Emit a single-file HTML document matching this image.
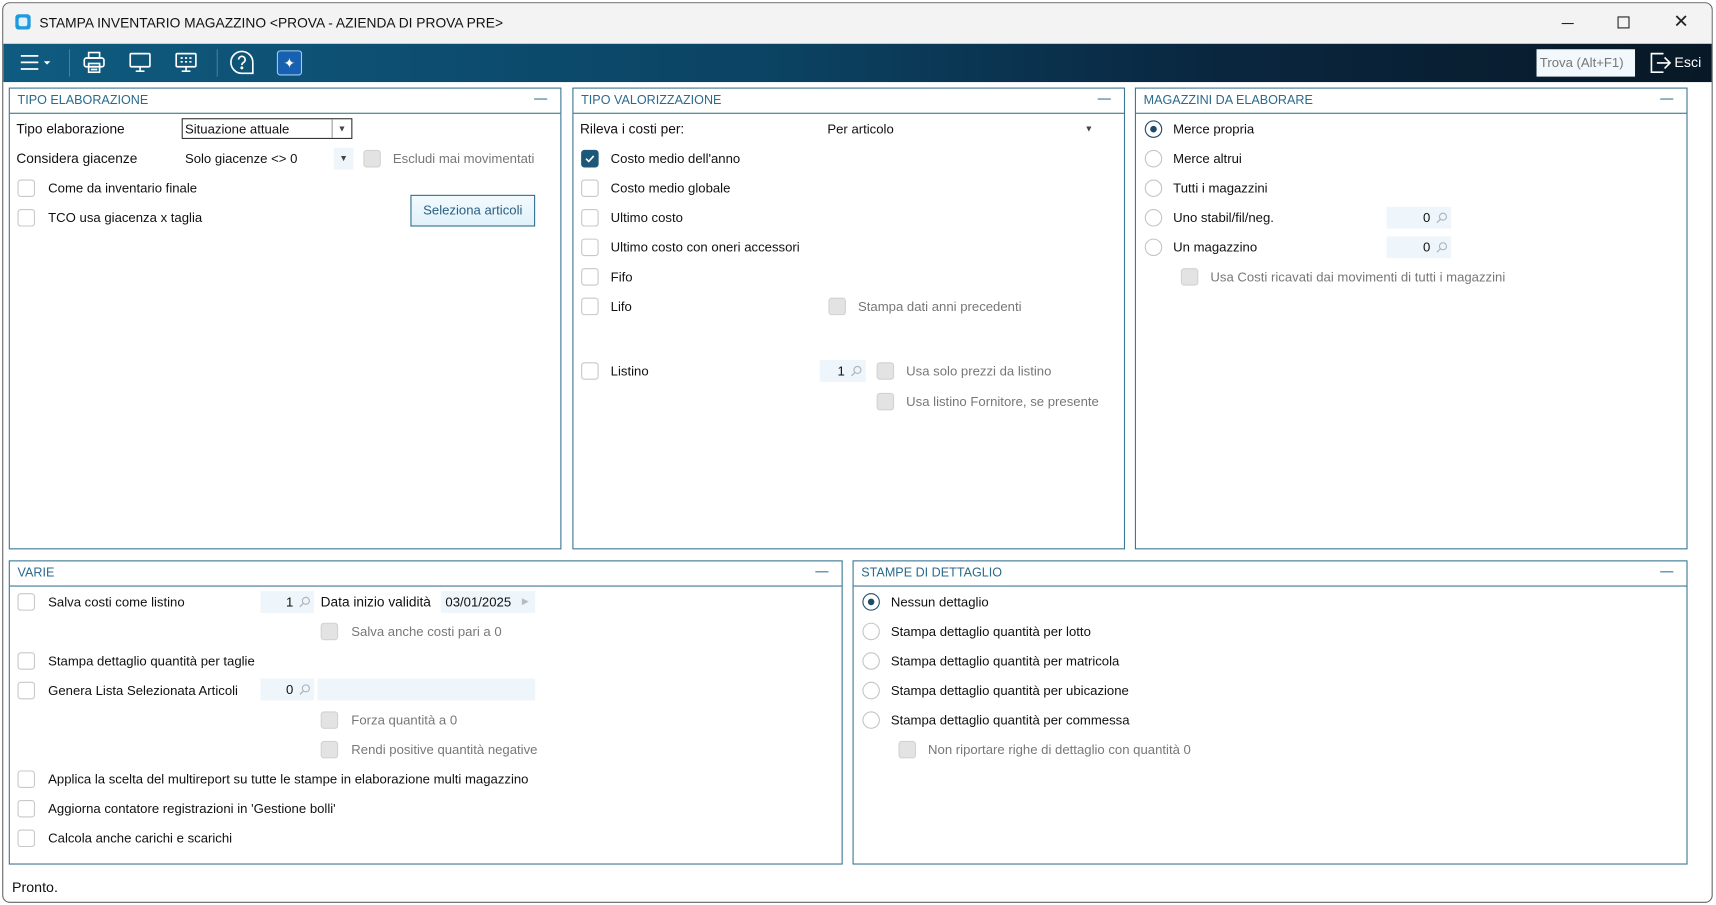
<!DOCTYPE html>
<html><head><meta charset="utf-8">
<style>
html,body{margin:0;padding:0;width:1716px;height:905px;overflow:hidden;background:#fff}
#w{position:absolute;left:0;top:0;width:1568px;height:827px;transform:scale(1.09439);transform-origin:0 0;font-family:"Liberation Sans",sans-serif;font-size:12px;color:#111}
.a{position:absolute;white-space:nowrap}
.frame{left:2px;top:2px;width:1561px;height:821px;border:1px solid #666;border-radius:7px;background:#fff;overflow:hidden}
.title{left:0;top:0;width:1563px;height:37px;background:#f3f3f3}
.tb{left:0;top:37px;width:1563px;height:35px;background:linear-gradient(90deg,#0f5b80 0%,#0b4363 45%,#0a2740 70%,#081826 100%)}
.p{position:absolute;border:1px solid #3a7592;background:#fff}
.ph{position:absolute;left:0;top:0;right:0;height:22px;border-bottom:1px solid #3a7592;color:#2a6a8c;font-size:11.5px;line-height:23px;padding-left:7px}
.ph:after{content:"";position:absolute;right:12px;top:9px;width:12px;height:1px;background:#3a7592}
.cb{position:absolute;width:14px;height:14px;border:1px solid #c8c8c8;border-radius:3px;background:#fff}
.cb.d{background:#e3e3e3;border-color:#d2d2d2}
.cb.c{background:#1d5878;border-color:#1d5878}
.rd{position:absolute;width:14px;height:14px;border:1px solid #c4c4c4;border-radius:50%;background:#fff}
.rd.c{border-color:#1d4a66}
.rd.c:after{content:"";position:absolute;left:4px;top:4px;width:6px;height:6px;border-radius:50%;background:#1d4a66}
.l{position:absolute;white-space:nowrap;line-height:14px}
.g{color:#777}
.f{position:absolute;background:#eef5fb;height:20px;line-height:20px;text-align:right}
.mg{display:inline-block;width:14px;height:12px;margin-left:3px;margin-right:2px;position:relative;top:2px}
</style></head><body>
<div id="w">
<div class="a frame">
<div class="a title">
<div class="a" style="left:11px;top:10px;width:14px;height:14px;border-radius:3px;background:#1e9be0"><div style="position:absolute;left:3px;top:3px;width:8px;height:8px;background:#dff1fb;border-radius:2px"></div></div>
<div class="a" style="left:33px;top:11px;font-size:12.6px;color:#111">STAMPA INVENTARIO MAGAZZINO &lt;PROVA - AZIENDA DI PROVA PRE&gt;</div>
<div class="a" style="left:1424px;top:18px;width:11px;height:1px;background:#222"></div>
<div class="a" style="left:1475px;top:12px;width:9px;height:9px;border:1px solid #222"></div>
<div class="a" style="left:1526px;top:7px;font-size:17px;color:#222">✕</div>
</div>
<div class="a tb">
<svg class="a" style="left:14px;top:8px" width="32" height="18" viewBox="0 0 32 18" stroke="#fff" stroke-width="1.6" fill="none"><path d="M2 3h16M2 9h16M2 15h16"/><path d="M23 8h6l-3 3z" fill="#fff" stroke="none"/></svg>
<div class="a" style="left:60px;top:5px;width:1px;height:25px;background:#4b7d98"></div>
<svg class="a" style="left:72px;top:6px" width="22" height="22" viewBox="0 0 22 22" stroke="#fff" stroke-width="1.5" fill="none"><rect x="6" y="2" width="10" height="5"/><rect x="2" y="7" width="18" height="8" rx="2"/><rect x="6" y="12" width="10" height="8"/><path d="M8 15h6M8 17.5h6"/></svg>
<svg class="a" style="left:114px;top:6px" width="22" height="22" viewBox="0 0 22 22" stroke="#fff" stroke-width="1.5" fill="none"><rect x="2" y="3" width="18" height="12" rx="1"/><path d="M11 15v4M7 19h8"/></svg>
<svg class="a" style="left:156px;top:6px" width="22" height="22" viewBox="0 0 22 22" stroke="#fff" stroke-width="1.5" fill="none"><rect x="2" y="3" width="18" height="12" rx="1"/><path d="M11 15v4M7 19h8M6 7h2M10 7h2M14 7h2M6 10.5h2M10 10.5h2M14 10.5h2"/></svg>
<div class="a" style="left:195px;top:5px;width:1px;height:25px;background:#4b7d98"></div>
<svg class="a" style="left:206px;top:5px" width="24" height="24" viewBox="0 0 24 24" stroke="#fff" stroke-width="1.5" fill="none"><path d="M12 2a10 10 0 1 0 0 20h10V12A10 10 0 0 0 12 2z"/><path d="M9 9.5a3 3 0 1 1 4.5 2.6c-1 .6-1.5 1.2-1.5 2.4"/><circle cx="12" cy="17" r=".6" fill="#fff"/></svg>
<div class="a" style="left:250px;top:6px;width:21px;height:21px;background:#1860b0;border:1px solid #9cc8ff;border-radius:3px;color:#fff;font-size:13px;text-align:center;line-height:21px">✦</div>
<div class="a" style="left:1401px;top:5px;width:90px;height:25px;background:#f3f8fc;color:#777;line-height:25px;padding-left:3px;box-sizing:border-box">Trova (Alt+F1)</div>
<svg class="a" style="left:1503px;top:6px" width="22" height="22" viewBox="0 0 22 22" stroke="#fff" stroke-width="1.5" fill="none"><path d="M14 3H3v17h11"/><path d="M8 11.5h12M15 6.5l5 5-5 5"/></svg>
<div class="a" style="left:1527px;top:9px;color:#fff;font-size:13px">Esci</div>
</div>
</div>

<svg width="0" height="0" style="position:absolute"><defs><symbol id="mg" viewBox="0 0 14 12"><circle cx="8.5" cy="5" r="3.2" fill="none" stroke="#aab2bc" stroke-width="1"/><path d="M6.2 7.3L3 10.5" stroke="#aab2bc" stroke-width="1.1"/></symbol></defs></svg>

<!-- Panel 1 -->
<div class="p" style="left:8px;top:80px;width:503px;height:420px"><div class="ph">TIPO ELABORAZIONE</div></div>
<div class="l" style="left:15px;top:111px;font-size:12.5px">Tipo elaborazione</div>
<div class="a" style="left:166px;top:108px;width:156px;height:19px;border:1px solid #333;box-sizing:border-box"><span style="position:absolute;left:2px;top:2px;font-size:12px">Situazione attuale</span><span style="position:absolute;right:0;top:0;width:17px;height:17px;border-left:1px solid #999;font-size:8px;text-align:center;line-height:17px;color:#444">▼</span></div>
<div class="l" style="left:15px;top:138px;font-size:12.5px">Considera giacenze</div>
<div class="l" style="left:169px;top:138px">Solo giacenze &lt;&gt; 0</div>
<div class="a" style="left:305px;top:135px;width:18px;height:20px;background:#eef5fb;font-size:8px;text-align:center;line-height:20px;color:#444">▼</div>
<div class="cb d" style="left:332px;top:137px"></div><div class="l g" style="left:359px;top:138px">Escludi mai movimentati</div>
<div class="cb" style="left:16px;top:164px"></div><div class="l" style="left:44px;top:165px">Come da inventario finale</div>
<div class="cb" style="left:16px;top:191px"></div><div class="l" style="left:44px;top:192px">TCO usa giacenza x taglia</div>
<div class="a" style="left:375px;top:178px;width:114px;height:29px;border:1px solid #2d6e8c;box-sizing:border-box;background:linear-gradient(#f2fafe,#e0f1fa);color:#2a5f80;text-align:center;line-height:27px">Seleziona articoli</div>

<!-- Panel 2 -->
<div class="p" style="left:523px;top:80px;width:503px;height:420px"><div class="ph">TIPO VALORIZZAZIONE</div></div>
<div class="l" style="left:530px;top:111px;font-size:12.5px">Rileva i costi per:</div>
<div class="l" style="left:756px;top:111px">Per articolo</div>
<div class="l" style="left:991px;top:111px;font-size:8px;color:#444">▼</div>
<div class="cb c" style="left:531px;top:137px"><svg style="position:absolute;left:1px;top:1px" width="12" height="12" viewBox="0 0 12 12" fill="none" stroke="#fff" stroke-width="1.5"><path d="M2.5 6l2.5 2.5 4.5-5"/></svg></div><div class="l" style="left:558px;top:138px">Costo medio dell'anno</div>
<div class="cb" style="left:531px;top:164px"></div><div class="l" style="left:558px;top:165px">Costo medio globale</div>
<div class="cb" style="left:531px;top:191px"></div><div class="l" style="left:558px;top:192px">Ultimo costo</div>
<div class="cb" style="left:531px;top:218px"></div><div class="l" style="left:558px;top:219px">Ultimo costo con oneri accessori</div>
<div class="cb" style="left:531px;top:245px"></div><div class="l" style="left:558px;top:246px">Fifo</div>
<div class="cb" style="left:531px;top:272px"></div><div class="l" style="left:558px;top:273px">Lifo</div>
<div class="cb d" style="left:757px;top:272px"></div><div class="l g" style="left:784px;top:273px">Stampa dati anni precedenti</div>
<div class="cb" style="left:531px;top:331px"></div><div class="l" style="left:558px;top:332px">Listino</div>
<div class="f" style="left:749px;top:329px;width:42px">1<svg class="mg"><use href="#mg"/></svg></div>
<div class="cb d" style="left:801px;top:331px"></div><div class="l g" style="left:828px;top:332px">Usa solo prezzi da listino</div>
<div class="cb d" style="left:801px;top:359px"></div><div class="l g" style="left:828px;top:360px">Usa listino Fornitore, se presente</div>

<!-- Panel 3 -->
<div class="p" style="left:1037px;top:80px;width:503px;height:420px"><div class="ph">MAGAZZINI DA ELABORARE</div></div>
<div class="rd c" style="left:1046px;top:110px"></div><div class="l" style="left:1072px;top:111px">Merce propria</div>
<div class="rd" style="left:1046px;top:137px"></div><div class="l" style="left:1072px;top:138px">Merce altrui</div>
<div class="rd" style="left:1046px;top:164px"></div><div class="l" style="left:1072px;top:165px">Tutti i magazzini</div>
<div class="rd" style="left:1046px;top:191px"></div><div class="l" style="left:1072px;top:192px">Uno stabil/fil/neg.</div>
<div class="f" style="left:1267px;top:189px;width:59px">0<svg class="mg"><use href="#mg"/></svg></div>
<div class="rd" style="left:1046px;top:218px"></div><div class="l" style="left:1072px;top:219px">Un magazzino</div>
<div class="f" style="left:1267px;top:216px;width:59px">0<svg class="mg"><use href="#mg"/></svg></div>
<div class="cb d" style="left:1079px;top:245px"></div><div class="l g" style="left:1106px;top:246px">Usa Costi ricavati dai movimenti di tutti i magazzini</div>

<!-- VARIE -->
<div class="p" style="left:8px;top:512px;width:760px;height:276px"><div class="ph">VARIE</div></div>
<div class="cb" style="left:16px;top:542px"></div><div class="l" style="left:44px;top:543px">Salva costi come listino</div>
<div class="f" style="left:238px;top:540px;width:49px">1<svg class="mg"><use href="#mg"/></svg></div>
<div class="l" style="left:293px;top:543px;font-size:12.5px">Data inizio validità</div>
<div class="f" style="left:403px;top:540px;width:86px;text-align:left"><span style="padding-left:4px">03/01/2025</span><span style="position:absolute;right:6px;color:#bbb;font-size:8px">▶</span></div>
<div class="cb d" style="left:293px;top:569px"></div><div class="l g" style="left:321px;top:570px">Salva anche costi pari a 0</div>
<div class="cb" style="left:16px;top:596px"></div><div class="l" style="left:44px;top:597px">Stampa dettaglio quantità per taglie</div>
<div class="cb" style="left:16px;top:623px"></div><div class="l" style="left:44px;top:624px">Genera Lista Selezionata Articoli</div>
<div class="f" style="left:238px;top:620px;width:49px">0<svg class="mg"><use href="#mg"/></svg></div>
<div class="f" style="left:290px;top:620px;width:199px"></div>
<div class="cb d" style="left:293px;top:650px"></div><div class="l g" style="left:321px;top:651px">Forza quantità a 0</div>
<div class="cb d" style="left:293px;top:677px"></div><div class="l g" style="left:321px;top:678px">Rendi positive quantità negative</div>
<div class="cb" style="left:16px;top:704px"></div><div class="l" style="left:44px;top:705px">Applica la scelta del multireport su tutte le stampe in elaborazione multi magazzino</div>
<div class="cb" style="left:16px;top:731px"></div><div class="l" style="left:44px;top:732px">Aggiorna contatore registrazioni in 'Gestione bolli'</div>
<div class="cb" style="left:16px;top:758px"></div><div class="l" style="left:44px;top:759px">Calcola anche carichi e scarichi</div>

<!-- STAMPE -->
<div class="p" style="left:779px;top:512px;width:761px;height:276px"><div class="ph">STAMPE DI DETTAGLIO</div></div>
<div class="rd c" style="left:788px;top:542px"></div><div class="l" style="left:814px;top:543px">Nessun dettaglio</div>
<div class="rd" style="left:788px;top:569px"></div><div class="l" style="left:814px;top:570px">Stampa dettaglio quantità per lotto</div>
<div class="rd" style="left:788px;top:596px"></div><div class="l" style="left:814px;top:597px">Stampa dettaglio quantità per matricola</div>
<div class="rd" style="left:788px;top:623px"></div><div class="l" style="left:814px;top:624px">Stampa dettaglio quantità per ubicazione</div>
<div class="rd" style="left:788px;top:650px"></div><div class="l" style="left:814px;top:651px">Stampa dettaglio quantità per commessa</div>
<div class="cb d" style="left:821px;top:677px"></div><div class="l g" style="left:848px;top:678px">Non riportare righe di dettaglio con quantità 0</div>

<div class="l" style="left:11px;top:804px;font-size:13px">Pronto.</div>
</div>
</body></html>
